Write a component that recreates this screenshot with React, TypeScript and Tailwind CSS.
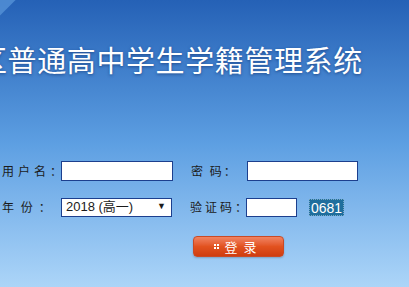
import React from 'react';

const cjk = { fontFamily: '"SimSun", "Noto Sans CJK SC", sans-serif' };

const App: React.FC = () => {
  return (
    <div
      className="relative w-[409px] h-[287px] overflow-hidden bg-gradient-to-b from-[#2561b6] via-[#5d9fe2] to-[#acd5f8] text-[#1b1b1b]"
      style={cjk}
    >
      {/* corner highlight */}
      <div className="absolute -left-[40px] -top-[40px] w-[56px] h-[56px] rotate-45 bg-[#5b98dc]/70" />

      {/* Title */}
      <div className="pt-[45px] -ml-[22px] whitespace-nowrap text-[29px] leading-none tracking-[0.6px] text-white [text-shadow:0_1px_3px_rgba(10,40,100,0.6)] font-['Noto_Sans_CJK_SC',sans-serif]">
        区普通高中学生学籍管理系统
      </div>

      {/* Form */}
      <div className="mt-[87px] flex flex-col gap-[16px] text-[12px]">
        <div className="flex items-center h-[20px] whitespace-nowrap">
          <span className="w-[61px] shrink-0 pl-[2px] tracking-[4px]">用户名<span className="tracking-normal">：</span></span>
          <div className="w-[112px] shrink-0 h-[20px] bg-white border border-[#1c3f8e]" />
          <span className="ml-[18px] w-[56px] shrink-0 tracking-[2px]">密 码<span className="tracking-normal">：</span></span>
          <div className="w-[111px] shrink-0 h-[20px] bg-white border border-[#1c3f8e]" />
        </div>
        <div className="flex items-center h-[20px] whitespace-nowrap">
          <span className="w-[61px] shrink-0 pl-[2px] tracking-[2px]">年 份<span className="tracking-normal ml-[4px]">：</span></span>
          <div className="w-[111px] shrink-0 h-[19px] bg-white border border-[#1c3f8e] flex items-center justify-between pl-[4px] pr-[5px] text-[13px] font-['Liberation_Sans','Noto_Sans_CJK_SC',sans-serif]">
            <span>2018 (高一)</span>
            <span className="text-[9px]">▼</span>
          </div>
          <span className="ml-[18px] w-[56px] shrink-0 tracking-[3px]">验证码<span className="tracking-normal">：</span></span>
          <div className="w-[51px] shrink-0 h-[19px] bg-white border border-[#1c3f8e]" />
          <div className="ml-[12px] w-[35px] shrink-0 h-[17px] bg-[#1f6e9d] text-white text-[14px] leading-[17px] text-center border border-dotted border-white/40 font-['Liberation_Sans',sans-serif]">
            0681
          </div>
        </div>
        <div className="pl-[193px] pt-[3px]">
          <button className="w-[91px] h-[21px] rounded-[4px] bg-gradient-to-b from-[#f08360] via-[#e2521f] to-[#cf3d10] border border-[#c94a26] flex items-center justify-center gap-[4px] text-white text-[13px] shadow-[0_1px_2px_rgba(0,0,0,0.2)]">
            <span className="grid grid-cols-2 gap-[1px] mr-[1px]">
              <span className="w-[2px] h-[2px] bg-white" />
              <span className="w-[2px] h-[2px] bg-white" />
              <span className="w-[2px] h-[2px] bg-white" />
              <span className="w-[2px] h-[2px] bg-white" />
            </span>
            <span className="tracking-[6px]">登录</span>
          </button>
        </div>
      </div>
    </div>
  );
};

export default App;
